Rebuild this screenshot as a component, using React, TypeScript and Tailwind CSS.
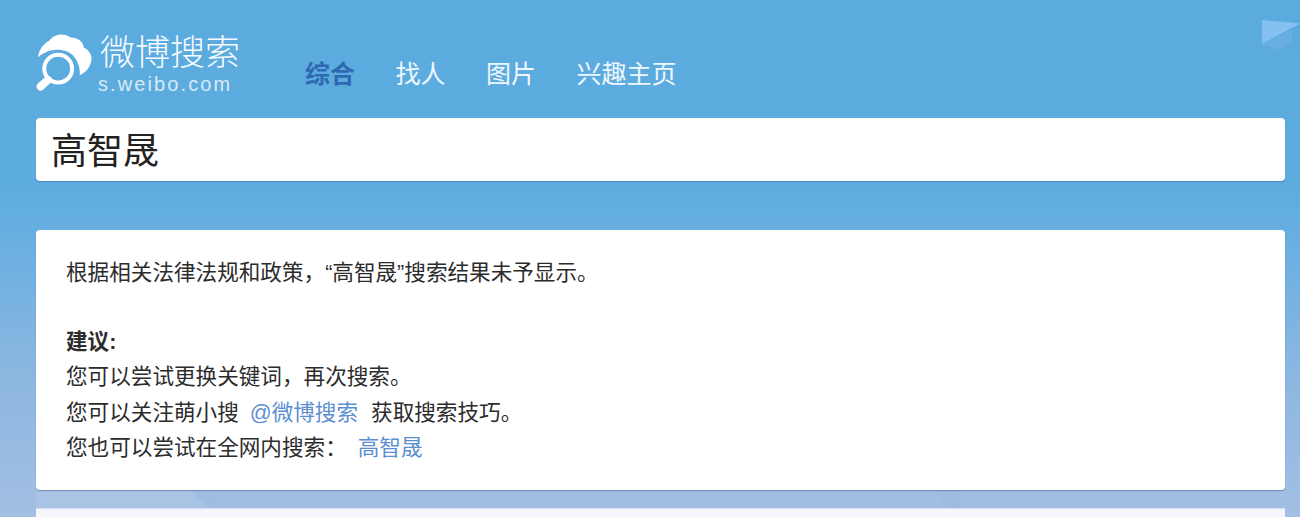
const navItems = ['综合', '找人', '图片', '兴趣主页'];

function Logo() {
  return (
    <svg width="58" height="60" viewBox="15 20 175 180" className="-ml-[1px] shrink-0" fill="none">
      <path
        d="M24 96 C28 70 42 54 58 46 C70 26 102 20 122 36 C142 36 160 46 162 66 C180 74 192 95 182 116 C178 130 166 142 150 150 C152 118 138 90 112 78 C85 68 50 72 24 96Z"
        fill="#fff"
      />
      <circle cx="85" cy="130" r="42" stroke="#fff" strokeWidth="12" />
      <path d="M54 164 L32 184" stroke="#fff" strokeWidth="24" strokeLinecap="round" />
    </svg>
  );
}

export default function App() {
  return (
    <div className="relative h-[517px] overflow-hidden bg-[linear-gradient(180deg,#5cabdf_0px,#5dacdf_185px,#69afe1_240px,#8db7e0_380px,#a3bfe3_517px)] font-['Liberation_Sans','Noto_Sans_CJK_SC',sans-serif]">
      <div className="absolute right-0 top-[20px] h-[24px] w-[38px] bg-[#84c0f0] [clip-path:polygon(0_0,100%_15%,0_100%)]" />
      <div className="absolute right-[8px] top-[30px] h-[20px] w-[28px] bg-[#6aaee6] [clip-path:polygon(100%_0,100%_60%,50%_100%,0_70%)]" />
      <div className="absolute bottom-[9px] left-[36px] h-[18px] w-[186px] bg-[#a8c3e4]" />
      <div className="absolute bottom-[9px] left-[190px] h-[18px] w-[32px] bg-[#9ebde0] [clip-path:polygon(0_0,100%_0,100%_100%,60%_100%)]" />
      <div className="absolute bottom-[9px] left-[933px] h-[18px] w-[28px] bg-[#9dbce0] [clip-path:polygon(0_0,100%_0,100%_100%,50%_100%)]" />

      <div className="relative flex flex-col pl-[36px] pr-[15px]">
        <header className="flex h-[118px] items-start">
          <div className="flex w-[269px] items-start pt-[32px]">
            <Logo />
            <div className="ml-[7px] flex flex-col text-white">
              <span className="mt-[1px] text-[35px] leading-[40px] font-extralight opacity-95">微博搜索</span>
              <span className="-ml-[2px] text-[20px] leading-[22px] tracking-[2.1px] opacity-75">s.weibo.com</span>
            </div>
          </div>
          <nav className="flex gap-[40.5px] pt-[56px]">
            {navItems.map((item, i) => (
              <a
                key={item}
                className={
                  i === 0
                    ? 'text-[25px] leading-[36px] font-bold text-[#2f69b2]'
                    : 'text-[25px] leading-[36px] text-[#eef7fd]'
                }
              >
                {item}
              </a>
            ))}
          </nav>
        </header>

        <div className="flex h-[63px] items-center rounded-[4px] bg-white pl-[15px] pt-[5px] text-[36px] text-[#222] shadow-[0_1px_1px_rgba(60,110,170,0.6)]">
          高智晟
        </div>

        <main className="mt-[49px] h-[260px] rounded-[4px] bg-white px-[30px] pt-[25px] text-[21.6px] leading-[35.2px] text-[#2c2c2c] shadow-[0_1px_1px_rgba(60,90,150,0.5)]">
          <p>根据相关法律法规和政策，“高智晟”搜索结果未予显示。</p>
          <p className="mt-[34px] font-bold">建议:</p>
          <p>您可以尝试更换关键词，再次搜索。</p>
          <p>
            您可以关注萌小搜<a className="ml-[11px] mr-[13px] text-[#5b8fd0]">@微博搜索</a>获取搜索技巧。
          </p>
          <p>
            您也可以尝试在全网内搜索：<a className="ml-[11px] text-[#5b8fd0]">高智晟</a>
          </p>
        </main>

        <div className="mt-[18px] h-[40px] border-t border-[#d5dcf3] bg-[#f6f6fd]" />
      </div>
    </div>
  );
}
